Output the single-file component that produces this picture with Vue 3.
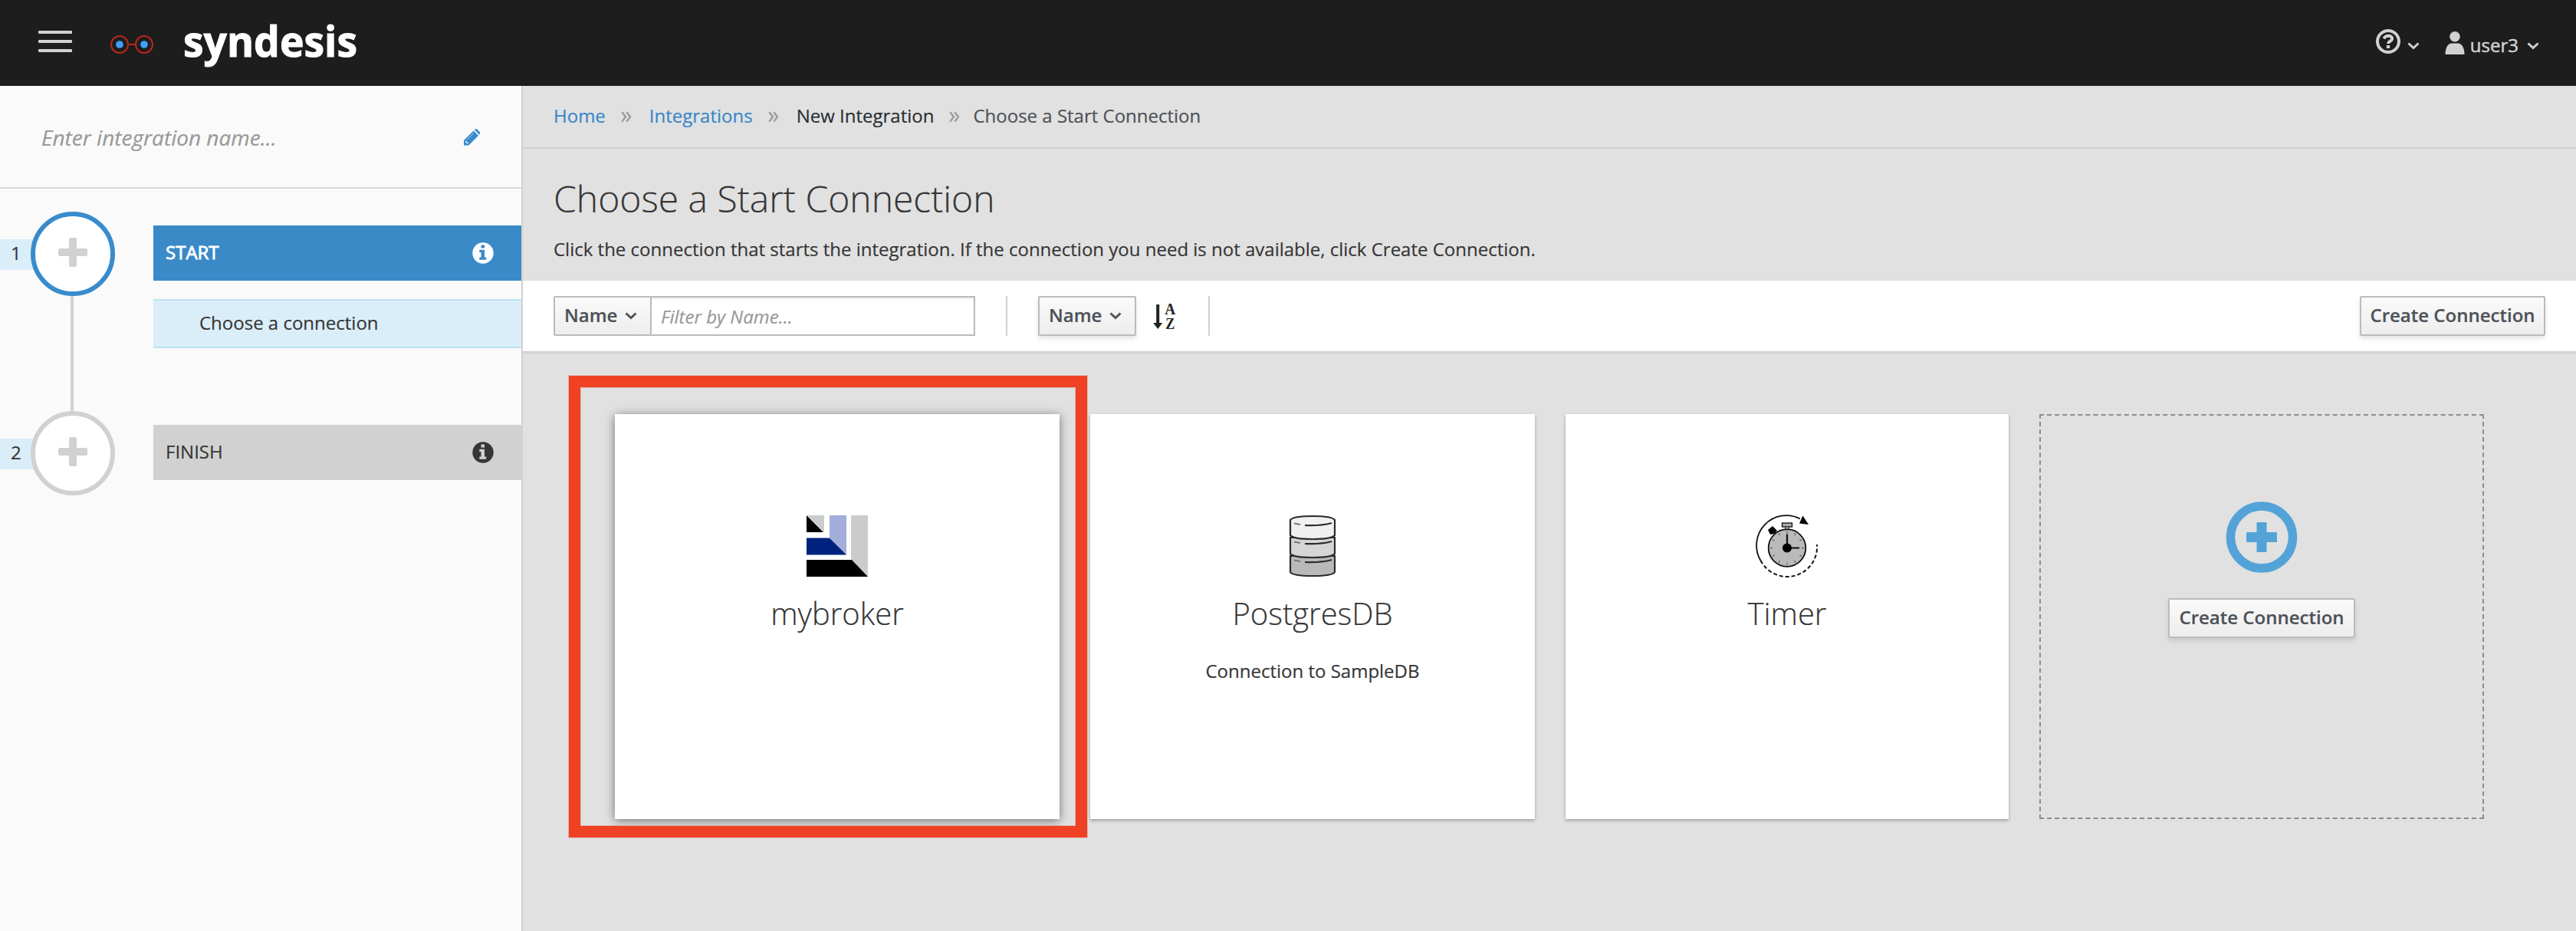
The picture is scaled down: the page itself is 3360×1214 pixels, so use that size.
<script setup>
const steps = [
  { n: 1, label: 'START', active: true, sub: 'Choose a connection' },
  { n: 2, label: 'FINISH', active: false },
]
const crumbs = [
  { text: 'Home', kind: 'link' },
  { text: 'Integrations', kind: 'link' },
  { text: 'New Integration', kind: 'dark' },
  { text: 'Choose a Start Connection', kind: 'current' },
]
const ticks = Array.from({ length: 12 }, (_, i) => i * 30)
</script>

<template>
  <div class="app">
    <header class="masthead">
      <div class="burger"><i></i><i></i><i></i></div>
      <svg class="glasses" width="56" height="26" viewBox="0 0 56 26">
        <g fill="none" stroke="#b5261c" stroke-width="2">
          <circle cx="12" cy="13" r="11" /><circle cx="44" cy="13" r="11" /><path d="M23 13H33" />
        </g>
        <circle cx="12" cy="13" r="4.8" fill="#3fa0f5" /><circle cx="44" cy="13" r="4.8" fill="#3fa0f5" />
      </svg>
      <svg class="brand" width="240" height="80" viewBox="0 0 240 80">
        <text x="0" y="58" textLength="227" lengthAdjust="spacingAndGlyphs">syndesis</text>
      </svg>
      <div class="tools">
        <svg class="help" width="32" height="32" viewBox="0 0 32 32" fill="none" stroke="#d1d1d1">
          <circle cx="16" cy="16" r="14" stroke-width="4" />
          <path d="M10.4 12.3C11.8 9.6 14 8.8 16.4 8.8C19.2 8.8 21.2 10.2 21.2 12.4C21.2 15.6 16.2 15.4 16.2 19" stroke-width="4" />
          <path d="M16 21V25" stroke-width="4.4" />
        </svg>
        <svg class="caret c1" width="16" height="10" viewBox="0 0 16 10"><path d="M1.5 1.5L8 7.5L14.5 1.5" /></svg>
        <svg class="person" width="26" height="30" viewBox="0 0 26 30" fill="#d1d1d1">
          <circle cx="13" cy="6.8" r="6.8" /><path d="M0.5 30C0.5 21 4 15.5 9 15.5H17C22 15.5 25.5 21 25.5 30Z" />
        </svg>
        <span class="user">user3</span>
        <svg class="caret c2" width="16" height="10" viewBox="0 0 16 10"><path d="M1.5 1.5L8 7.5L14.5 1.5" /></svg>
      </div>
    </header>

    <div class="body">
      <aside class="side">
        <div class="name-row">
          <span class="ph">Enter integration name...</span>
          <svg width="22" height="22" viewBox="0 0 22 22">
            <path fill="#388bcc" d="M0 15L12.6 2.4L19 8.8L6.4 21.4H0Z M13.8 1.2L14.6 .5Q16 -.4 17.4 .8L20.8 4.2Q21.8 5.6 20.8 6.9L20.1 7.6Z" />
            <path d="M4.5 13.8L12.5 5.8" stroke="#b9d7ee" stroke-width="1" />
            <path d="M2 16.2L3.4 15V17.5H6L5.5 19L4.4 19.5L2 17.5Z" fill="#fafafa" />
          </svg>
        </div>
        <div class="steps">
          <div v-for="s in steps" :key="s.n" class="step" :class="{ active: s.active }">
            <span class="num">{{ s.n }}</span>
            <div class="rail">
              <div class="circle">
                <svg width="38" height="38" viewBox="0 0 38 38" fill="#d1d1d1"><rect x="14" width="10" height="38" rx="2" /><rect y="14" width="38" height="10" rx="2" /></svg>
              </div>
              <div v-if="s.sub" class="line"></div>
            </div>
            <div class="step-main">
              <div class="bar">
                <span>{{ s.label }}</span>
                <svg width="28" height="28" viewBox="0 0 28 28">
                  <circle class="disc" cx="14" cy="14" r="13.7" />
                  <path class="mark" d="M11.5 3.5H16V7.5H11.5Z M9.3 9.7H16V19.4H18.2V22.8H9.3V19.4H11.5V13H9.3Z" />
                </svg>
              </div>
              <div v-if="s.sub" class="sub">{{ s.sub }}</div>
            </div>
          </div>
        </div>
      </aside>

      <main class="main">
        <nav class="crumbs">
          <template v-for="(c, i) in crumbs" :key="c.text">
            <svg v-if="i" class="sep" width="14" height="15" viewBox="0 0 14 15"><path d="M1.3 1.2L6 7.3L1.3 13.6M7.3 1.2L12 7.3L7.3 13.6" /></svg>
            <span :class="[c.kind, 'k' + i]">{{ c.text }}</span>
          </template>
        </nav>
        <section class="intro">
          <h1>Choose a Start Connection</h1>
          <p>Click the connection that starts the integration. If the connection you need is not available, click Create Connection.</p>
        </section>
        <section class="toolbar">
          <div class="btn joined">Name<svg class="caret" width="16" height="10" viewBox="0 0 16 10"><path d="M1.5 1.5L8 7.5L14.5 1.5" /></svg></div>
          <div class="input">Filter by Name...</div>
          <div class="rule r1"></div>
          <div class="btn">Name<svg class="caret" width="16" height="10" viewBox="0 0 16 10"><path d="M1.5 1.5L8 7.5L14.5 1.5" /></svg></div>
          <svg class="sort" width="30" height="36" viewBox="0 0 30 36">
            <path d="M4.2 2H8.2V26H12.2L6.2 34L.2 26H4.2Z" />
            <text x="22.3" y="15" textLength="14" lengthAdjust="spacingAndGlyphs" text-anchor="middle">A</text>
            <text x="22.3" y="34" textLength="12" lengthAdjust="spacingAndGlyphs" text-anchor="middle">Z</text>
          </svg>
          <div class="rule r2"></div>
          <div class="btn create">Create Connection</div>
        </section>

        <section class="cards">
          <div class="frame"></div>
          <article class="card selected">
            <svg width="80" height="80" viewBox="0 0 80 80">
              <path fill="#cacbcd" d="M1 0H23V22Z M58 0H80V80L58 57Z" />
              <path fill="#000" d="M0 0L22 22H0Z M0 58H59L80 80H0Z" />
              <path fill="#a3aeda" d="M30 0H52V52L30 29Z" />
              <path fill="#00227f" d="M0 29.500H30L52 51.500H0Z" />
            </svg>
            <h2>mybroker</h2>
          </article>
          <article class="card">
            <svg width="80" height="80" viewBox="0 0 80 80" stroke="#2c2c2c" stroke-width="2.200" fill="none">
              <path fill="#b9b9b9" d="M11 53V74Q14 79 40 79Q66 79 69 74V53Z" />
              <path fill="#d5d5d5" d="M11 29V50Q15 55 40 55Q65 55 69 50V29Z" />
              <path fill="#f0f0f0" d="M11 6V26Q15 31 40 31Q65 31 69 26V6Q65 1 40 1Q15 1 11 6Z" />
              <path d="M30 13Q50 14 65 10M30 37Q50 38 65 34M30 61Q50 62 65 58" />
              <path stroke="#777" d="M16 10.500L24 12M16 34.500L24 36M16 58.500L24 60" />
            </svg>
            <h2>PostgresDB</h2>
            <p>Connection to SampleDB</p>
          </article>
          <article class="card">
            <svg width="80" height="80" viewBox="0 0 80 80" fill="none" stroke="#111">
              <path stroke-width="1.800" d="M5.500 59A39 39 0 0 1 57 4.500" />
              <path stroke-width="2" stroke-dasharray="5 3" d="M5.500 59A39 39 0 0 0 79 38" />
              <path fill="#000" stroke="none" d="M60.500 .5L68 12L56 10.500Z" />
              <path fill="#000" stroke="none" d="M15 19L21 14L27 20L23.500 24L18 25Z" />
              <path stroke-width="1.500" d="M22 20L27 25" />
              <rect x="33.500" y="10" width="13" height="5" fill="#aaa" stroke-width="1.300" />
              <path stroke-width="1.200" d="M38 15V18M42 15V18" />
              <circle cx="40" cy="42.500" r="24.300" fill="#bababa" stroke-width="1.800" />
              <path v-for="t in ticks" :key="t" d="M40 20.500V23.500" stroke="#555" stroke-width="1.200" :transform="`rotate(${t} 40 42.500)`" />
              <path stroke-width="2.200" d="M40 42.500V24.500M40 42.500H56" />
              <circle cx="40" cy="42.500" r="6" fill="#000" stroke="none" />
            </svg>
            <h2>Timer</h2>
          </article>
          <article class="card blank">
            <svg width="92" height="93" viewBox="0 0 92 93">
              <circle cx="46" cy="46.500" r="40.500" fill="none" stroke="#54a3d8" stroke-width="11.500" />
              <g fill="#54a3d8"><rect x="39.500" y="27" width="13" height="39" rx="1" /><rect x="26" y="40" width="40" height="13" rx="1" /></g>
            </svg>
            <div class="btn">Create Connection</div>
          </article>
        </section>
      </main>
    </div>
  </div>
</template>

<style>
body { background: #e1e1e1; }
</style>

<style scoped>
* { box-sizing: border-box; }
.app { width: 3360px; height: 1214px; display: flex; flex-direction: column; overflow: hidden; font-family: "Open Sans", "Noto Sans", sans-serif; font-size: 24px; color: #363636; -webkit-text-stroke: .2px; }
svg { display: block; flex: none; overflow: visible; }
h1, h2, p { margin: 0; font-weight: 400; }
.masthead { height: 112px; flex: none; background: #1d1d1d; display: flex; align-items: flex-start; padding-left: 50px; }
.burger { width: 44px; margin-top: 40px; display: flex; flex-direction: column; gap: 8px; }
.burger i { height: 4px; border-radius: 1px; background: #d1d1d1; }
.glasses { margin: 45px 0 0 50px; }
.brand { margin: 16px 0 0 39px; }
.brand text { font: 700 55px "Open Sans", sans-serif; fill: #fff; stroke: #fff; stroke-width: 1; }
.tools { display: flex; margin-left: auto; padding-right: 48px; color: #d1d1d1; }
.help { margin-top: 38px; }
.caret path { fill: none; stroke: currentColor; stroke-width: 3; }
.c1 { margin: 55px 0 0 9px; }
.person { margin: 41px 0 0 33px; }
.user { line-height: 40px; margin: 39px 0 0 7px; -webkit-text-stroke: .5px; }
.c2 { margin: 55px 0 0 11px; }
.body { flex: 1; display: flex; }
.side { width: 682px; flex: none; background: #fafafa; border-right: 2px solid #d1d1d1; }
.name-row { height: 134px; border-bottom: 2px solid #d9d9d9; display: flex; align-items: center; justify-content: space-between; padding: 2px 53px 0 54px; }
.ph { font-size: 28px; font-style: italic; color: #999; }
.steps { padding-top: 30px; }
.step { display: flex; height: 260px; }
.num { width: 44px; height: 40px; margin: 36px -4px 0 0; padding: 0 0 5px 14px; background: #daeef9; line-height: 35px; }
.rail { width: 110px; display: flex; flex-direction: column; position: relative; }
.circle { width: 110px; height: 110px; border-radius: 50%; border: 6px solid #d1d1d1; background: #fff; display: flex; align-items: center; justify-content: center; padding-bottom: 4px; }
.active .circle { border-color: #388bcc; }
.line { width: 4px; height: 150px; margin-left: 52px; background: #d1d1d1; }
.step-main { width: 480px; margin: 18px 0 0 50px; }
.bar { height: 72px; background: #d1d1d1; display: flex; align-items: center; justify-content: space-between; padding: 0 36px 0 16px; }
.bar span { padding-bottom: 3px; }
.bar .disc { fill: #363636; }
.bar .mark { fill: #d1d1d1; }
.active .bar { background: #3a8ac8; color: #fff; -webkit-text-stroke: .8px; }
.active .disc { fill: #fff; }
.active .mark { fill: #3a8ac8; }
.sub { height: 64px; margin-top: 24px; background: #daeef9; border: solid #bee1f4; border-width: 2px 0; padding-left: 60px; line-height: 57px; }
.main { flex: 1; background: #e1e1e1; }
.crumbs { height: 82px; border-bottom: 2px solid #d1d1d1; display: flex; align-items: center; padding: 0 40px 3px; }
.crumbs span { white-space: nowrap; }
.link { color: #3a87c9; }
.dark { color: #292e34; }
.current { color: #4d5258; }
.sep { margin: 3px 23px 0 20px; }
.sep path { fill: none; stroke: #9c9c9c; stroke-width: 2.4; }
.k3 { margin-left: -6px; }
.intro { height: 172px; padding: 39px 40px 0; }
.intro h1 { font-size: 48px; font-weight: 300; line-height: 52px; }
.intro p { line-height: 40px; margin-top: 20px; }
.toolbar { height: 96px; background: #fff; border-bottom: 2px solid #d9d9d9; box-shadow: inset 0 -2px #d1d1d1; display: flex; padding: 20px 40px 0; }
.btn { height: 52px; border: 2px solid #bbb; border-radius: 2px; background: linear-gradient(#fafafa, #ededed); box-shadow: 0 4px 6px rgba(3, 3, 3, .1); font-weight: 600; color: #4d5258; line-height: 45px; padding: 0 12px; display: flex; white-space: nowrap; }
.toolbar .btn:not(.create) { width: 128px; }
.btn .caret { margin: 19px 0 0 10px; }
.toolbar .joined { box-shadow: none; border-radius: 2px 0 0 2px; }
.input { width: 424px; height: 52px; margin-left: -2px; border: 2px solid #bbb; box-shadow: inset 0 2px 2px rgba(3, 3, 3, .07); padding-left: 12px; line-height: 49px; font-style: italic; color: #999; }
.rule { width: 2px; height: 52px; background: #d1d1d1; }
.r1 { margin: 0 40px; }
.sort { margin: 9px 0 0 22px; }
.sort path, .sort text { fill: #222; }
.sort text { font: 700 20px "Liberation Serif", serif; }
.r2 { margin-left: 42px; }
.toolbar .create { margin-left: auto; width: 242px; }
.create, .blank .btn { justify-content: center; padding: 0; }
.cards { position: relative; display: grid; grid-template-columns: 580px 580px 578px 580px; column-gap: 40px; padding: 78px 0 0 120px; }
.frame { position: absolute; z-index: 2; left: 60px; top: 28px; width: 676px; height: 602px; border: 15px solid #ef4123; box-shadow: 0 0 0 1px rgba(205, 110, 90, .3), inset 0 0 0 1px rgba(205, 110, 90, .3); }
.card { height: 528px; background: #fff; box-shadow: 0 2px 4px rgba(3, 3, 3, .3); display: flex; flex-direction: column; align-items: center; padding-top: 132px; }
.selected { box-shadow: 0 2px 12px rgba(3, 3, 3, .5); }
.card h2 { font-size: 40px; font-weight: 300; line-height: 44px; margin-top: 26px; }
.card p { line-height: 34px; margin-top: 36px; }
.blank { background: none; box-shadow: none; border: 2px dashed #8b8d8f; padding-top: 112px; }
.blank .btn { width: 244px; margin-top: 33px; }
</style>
